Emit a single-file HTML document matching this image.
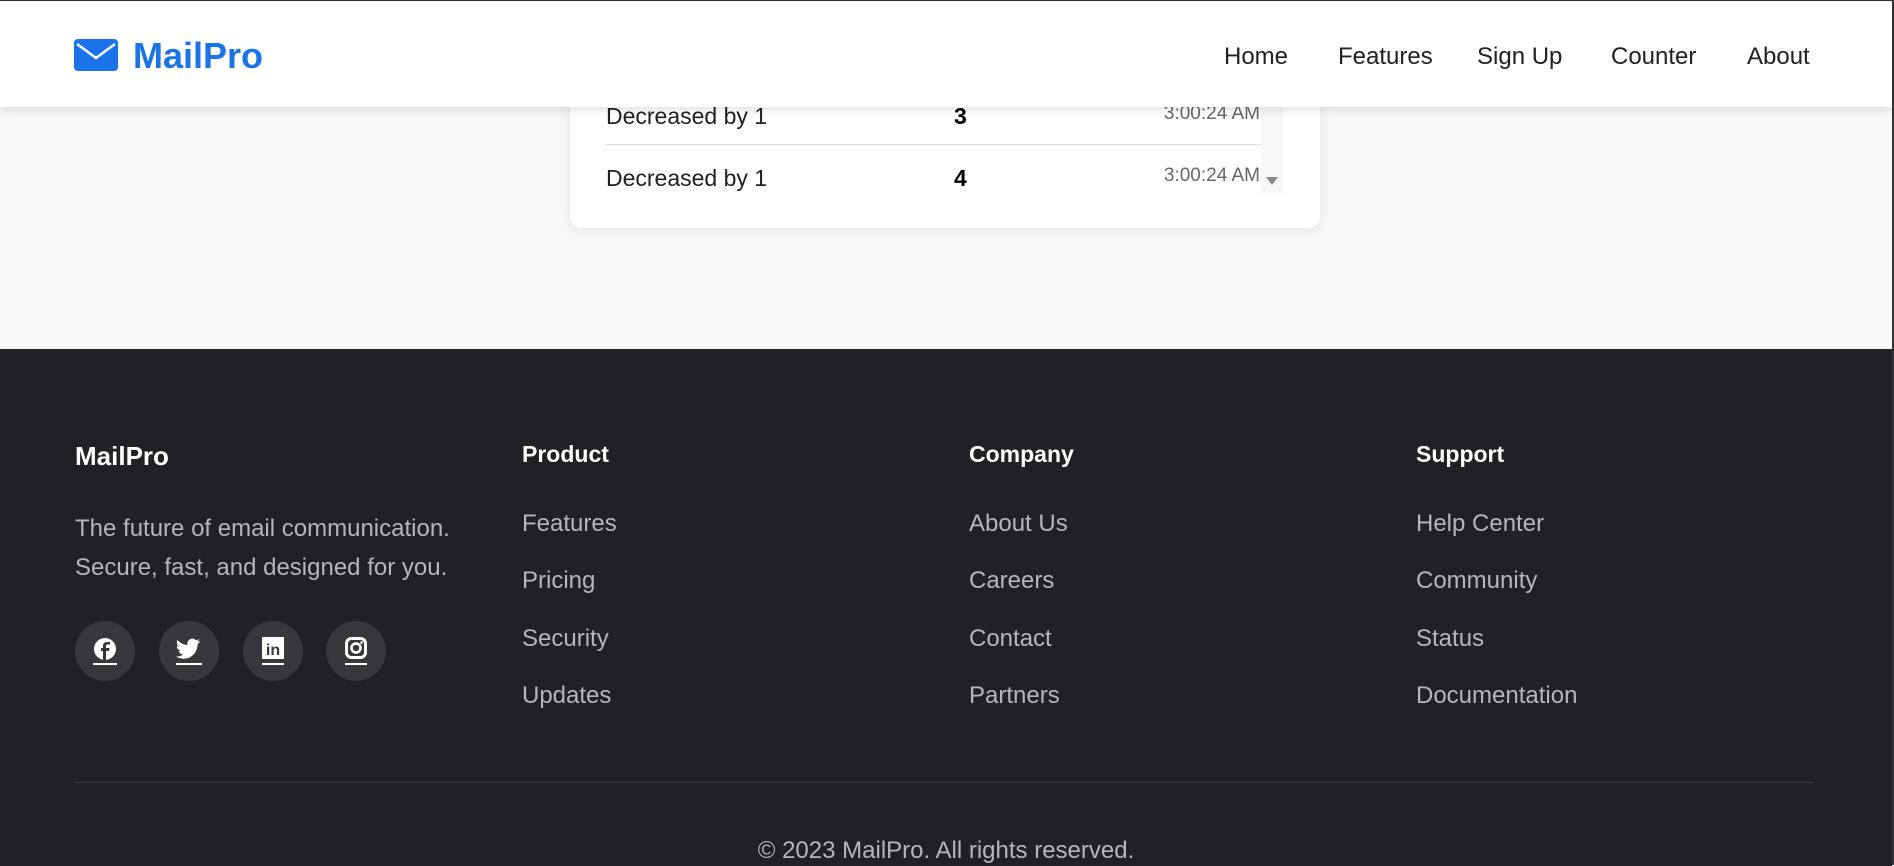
<!DOCTYPE html>
<html><head><meta charset="utf-8"><style>
*{margin:0;padding:0;box-sizing:border-box}
body{width:1894px;height:865px;overflow:hidden;font-family:"Liberation Sans",sans-serif;background:#f7f8fa;position:relative;border-top:1px solid #333;border-right:2px solid #333}
.abs{position:absolute;white-space:nowrap}
nav{position:absolute;left:0;top:1px;width:1892px;height:105px;background:#fff;box-shadow:0 3px 10px rgba(0,0,0,.12);z-index:2}
.nl{font-size:24px;color:#202124;top:41px}
.card{position:absolute;left:570px;top:60px;width:750px;height:167px;background:#fff;border-radius:12px;box-shadow:0 3px 12px rgba(0,0,0,.08)}
.row{font-size:23px;color:#202124}
.num{font-size:23px;color:#000;font-weight:600}
.tm{font-size:19px;color:#666}
footer{position:absolute;left:0;top:348px;width:1892px;height:517px;background:#202124}
.h{font-size:23px;font-weight:bold;color:#fff}
.l{font-size:24px;color:#b4b6ba}
.soc{position:absolute;width:60px;height:60px;border-radius:50%;background:#37383b;top:272px;display:flex;align-items:center;justify-content:center}
</style></head><body>
<div class="card">
<div class="abs row" style="left:36px;top:42px">Decreased by 1</div>
<div class="abs num" style="left:384px;top:42px">3</div>
<div class="abs tm" style="right:60px;top:42px">3:00:24 AM</div>
<div class="abs" style="left:36px;top:83px;width:655px;height:1px;background:#dcdcdf"></div>
<div class="abs row" style="left:36px;top:104px">Decreased by 1</div>
<div class="abs num" style="left:384px;top:104px">4</div>
<div class="abs tm" style="right:60px;top:104px">3:00:24 AM</div>
<div class="abs" style="left:691px;top:40px;width:22px;height:92px;background:#f8f8f8"></div>
<div class="abs" style="left:696px;top:116px;width:0;height:0;border-left:6px solid transparent;border-right:6px solid transparent;border-top:8px solid #888"></div>
</div>
<nav>
<svg class="abs" style="left:74px;top:37px" width="44" height="32" viewBox="0 0 44 32"><rect x="0" y="0" width="44" height="32" rx="4" fill="#1a73e8"/><path d="M3 5 L22 19 L41 5" stroke="#fff" stroke-width="2.5" fill="none"/></svg>
<div class="abs" style="left:133px;top:33px;font-size:36px;font-weight:bold;color:#1a73e8">MailPro</div>
<div class="abs nl" style="left:1224px">Home</div>
<div class="abs nl" style="left:1338px">Features</div>
<div class="abs nl" style="left:1477px">Sign Up</div>
<div class="abs nl" style="left:1611px">Counter</div>
<div class="abs nl" style="left:1747px">About</div>
</nav>
<footer>
<div class="abs h" style="left:75px;top:92px;font-size:26px">MailPro</div>
<div class="abs l" style="left:75px;top:160px;line-height:39px">The future of email communication.<br>Secure, fast, and designed for you.</div>
<div class="soc" style="left:75px"><svg width="24" height="28" viewBox="0 0 24 28"><circle cx="12" cy="12" r="11" fill="#fff"/><path d="M13 23V14h3l.5-3H13V9c0-1 .5-1.5 1.5-1.5H17V5h-3c-2.5 0-4 1.5-4 4v2H8v3h2v9z" fill="#37383b"/><rect x="0" y="26" width="24" height="2" fill="#fff"/></svg></div>
<div class="soc" style="left:159px"><svg width="26" height="28" viewBox="0 0 26 28"><path d="M24 4c-1 .5-2 .7-3 .8 1-.6 1.8-1.6 2.2-2.7-1 .6-2 1-3.2 1.2A5 5 0 0 0 11.5 8 14 14 0 0 1 1.5 3a5 5 0 0 0 1.5 6.6c-.8 0-1.6-.3-2.2-.6 0 2.4 1.7 4.4 4 4.9-.7.2-1.5.2-2.2.1.6 2 2.5 3.4 4.6 3.4A10 10 0 0 1 0 19.5 14 14 0 0 0 7.5 21.7c9 0 14-7.5 14-14v-.6c1-.7 1.8-1.6 2.5-2.6z" fill="#fff"/><rect x="0" y="26" width="26" height="2" fill="#fff"/></svg></div>
<div class="soc" style="left:243px"><svg width="22" height="28" viewBox="0 0 22 28"><rect x="0" y="0" width="22" height="22" fill="#fff"/><text x="11" y="18" text-anchor="middle" font-family="Liberation Sans" font-weight="bold" font-size="16" fill="#37383b">in</text><rect x="0" y="26" width="22" height="2" fill="#fff"/></svg></div>
<div class="soc" style="left:326px"><svg width="22" height="28" viewBox="0 0 22 28"><rect x="1.5" y="1.5" width="19" height="19" rx="5" stroke="#fff" stroke-width="3" fill="none"/><circle cx="11" cy="11" r="4.5" stroke="#fff" stroke-width="2.5" fill="none"/><circle cx="16.5" cy="5.5" r="1.3" fill="#fff"/><rect x="0" y="26" width="22" height="2" fill="#fff"/></svg></div>
<div class="abs h" style="left:522px;top:92px">Product</div>
<div class="abs l" style="left:522px;top:161px">Features</div>
<div class="abs l" style="left:522px;top:218px">Pricing</div>
<div class="abs l" style="left:522px;top:276px">Security</div>
<div class="abs l" style="left:522px;top:333px">Updates</div>
<div class="abs h" style="left:969px;top:92px">Company</div>
<div class="abs l" style="left:969px;top:161px">About Us</div>
<div class="abs l" style="left:969px;top:218px">Careers</div>
<div class="abs l" style="left:969px;top:276px">Contact</div>
<div class="abs l" style="left:969px;top:333px">Partners</div>
<div class="abs h" style="left:1416px;top:92px">Support</div>
<div class="abs l" style="left:1416px;top:161px">Help Center</div>
<div class="abs l" style="left:1416px;top:218px">Community</div>
<div class="abs l" style="left:1416px;top:276px">Status</div>
<div class="abs l" style="left:1416px;top:333px">Documentation</div>
<div class="abs" style="left:75px;top:433px;width:1739px;height:1px;background:#3a3b3e"></div>
<div class="abs l" style="left:0;width:1892px;text-align:center;top:488px">© 2023 MailPro. All rights reserved.</div>
</footer>
</body></html>
